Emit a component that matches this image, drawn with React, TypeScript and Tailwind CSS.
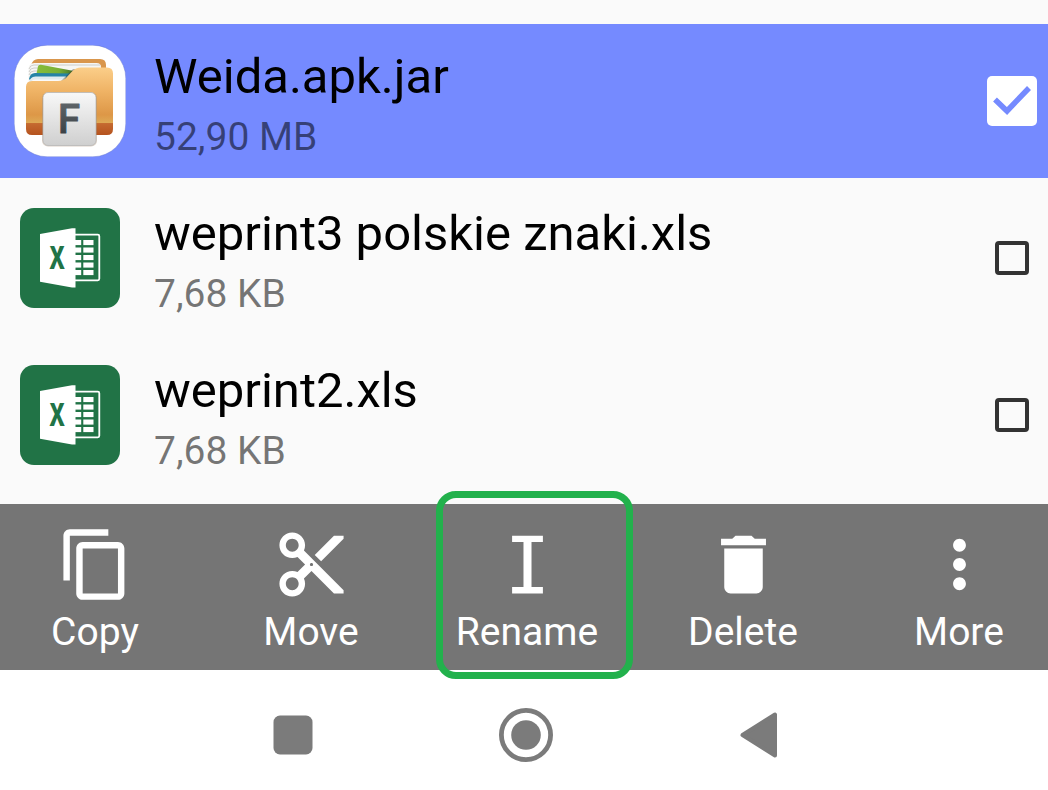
import { useState } from "react";

type FileType = "app" | "xls";

type FileItem = {
  name: string;
  size: string;
  type: FileType;
};

const files: FileItem[] = [
  { name: "Weida.apk.jar", size: "52,90 MB", type: "app" },
  { name: "weprint3 polskie znaki.xls", size: "7,68 KB", type: "xls" },
  { name: "weprint2.xls", size: "7,68 KB", type: "xls" },
];

const actions = [
  {
    label: "Copy",
    path: "M16 1H4c-1.1 0-2 .9-2 2v14h2V3h12V1zm3 4H8c-1.1 0-2 .9-2 2v14c0 1.1.9 2 2 2h11c1.1 0 2-.9 2-2V7c0-1.1-.9-2-2-2zm0 16H8V7h11v14z",
  },
  {
    label: "Move",
    path: "M9.64 7.64c.23-.5.36-1.05.36-1.64 0-2.21-1.79-4-4-4S2 3.79 2 6s1.79 4 4 4c.59 0 1.14-.13 1.64-.36L10 12l-2.36 2.36C7.14 14.13 6.59 14 6 14c-2.21 0-4 1.79-4 4s1.79 4 4 4 4-1.79 4-4c0-.59-.13-1.14-.36-1.64L12 14l7 7h3v-1L9.64 7.64zM6 8c-1.1 0-2-.89-2-2s.9-2 2-2 2 .89 2 2-.9 2-2 2zm0 12c-1.1 0-2-.89-2-2s.9-2 2-2 2 .89 2 2-.9 2-2 2zm6-7.5c-.28 0-.5-.22-.5-.5s.22-.5.5-.5.5.22.5.5-.22.5-.5.5zM19 3l-6 6 2 2 7-7V3z",
  },
  {
    label: "Rename",
    path: "M7.2 3h9.6v2h-3.55v14h3.55v2H7.2v-2h3.55V5H7.2z",
    highlighted: true,
  },
  {
    label: "Delete",
    path: "M6 19c0 1.1.9 2 2 2h8c1.1 0 2-.9 2-2V7H6v12zM19 4h-3.5l-1-1h-5l-1 1H5v2h14V4z",
  },
  {
    label: "More",
    path: "M12 8c1.1 0 2-.9 2-2s-.9-2-2-2-2 .9-2 2 .9 2 2 2zm0 2c-1.1 0-2 .9-2 2s.9 2 2 2 2-.9 2-2-.9-2-2-2zm0 6c-1.1 0-2 .9-2 2s.9 2 2 2 2-.9 2-2-.9-2-2-2z",
  },
];

export default function App() {
  return (
    <div className="flex min-h-screen flex-col overflow-x-clip bg-white font-[Roboto,sans-serif]">
      <FileList />
      <ActionBar />
      <SystemNav />
    </div>
  );
}

const FileList = () => {
  const [selected, setSelected] = useState<string[]>(["Weida.apk.jar"]);
  const toggle = (name: string) =>
    setSelected((state) =>
      state.includes(name) ? state.filter((n) => n !== name) : [...state, name]
    );
  return (
    <ul className="flex flex-col gap-[3px] bg-[#fafafa] pt-6 pb-3">
      {files.map((file) => (
        <FileRow
          key={file.name}
          file={file}
          checked={selected.includes(file.name)}
          onToggle={() => toggle(file.name)}
        />
      ))}
    </ul>
  );
};

type FileRowProps = {
  file: FileItem;
  checked: boolean;
  onToggle: () => void;
};

const FileRow = ({ file, checked, onToggle }: FileRowProps) => {
  return (
    <li className={checked ? "bg-[#758aff]" : ""}>
      <label className="flex items-center gap-7 pr-[11px] pl-[14px]">
        <span className="flex w-28 shrink-0 justify-center">
          {file.type === "app" ? <FolderIcon /> : <ExcelIcon />}
        </span>
        <span className="flex min-w-0 grow flex-col gap-2 pt-6 pb-[18px]">
          <span className="truncate text-[49px] leading-[58px] text-black">
            {file.name}
          </span>
          <span className="text-[39px] leading-[46px] text-black/54">
            {file.size}
          </span>
        </span>
        <span className="relative flex size-[50px] shrink-0 items-center justify-center">
          <input
            type="checkbox"
            checked={checked}
            onChange={onToggle}
            className="size-[34px] appearance-none rounded-[4px] border-4 border-[#333333] checked:size-[50px] checked:rounded-[5px] checked:border-0 checked:bg-white"
          />
          {checked && (
            <svg
              viewBox="0 0 50 50"
              className="pointer-events-none absolute inset-0"
              fill="none"
              stroke="#758aff"
              strokeWidth="5.5"
            >
              <path d="M8 23.5l12 11.5L42 12" />
            </svg>
          )}
        </span>
      </label>
    </li>
  );
};

const ActionBar = () => {
  return (
    <div className="-mr-[19px] -ml-[13px] grid grid-cols-5 bg-[#757575] text-white">
      {actions.map((action) => (
        <button
          key={action.label}
          type="button"
          className="relative flex flex-col items-center gap-[6px] pt-[22px] pb-[15px]"
        >
          <svg viewBox="0 0 24 24" className="size-[77px]" fill="currentColor">
            <path d={action.path} />
          </svg>
          <span className="text-[39px] leading-[46px]">{action.label}</span>
          {action.highlighted && (
            <span className="absolute -top-[13px] right-[2px] -bottom-[9px] left-[17px] rounded-[20px] border-7 border-[#22b14c]" />
          )}
        </button>
      ))}
    </div>
  );
};

const SystemNav = () => {
  const button = "flex w-[233px] items-center justify-center";
  return (
    <nav className="flex justify-center pt-[38px] pb-7 pl-1 text-[#7b7b7b]">
      <button type="button" aria-label="Recents" className={button}>
        <svg viewBox="0 0 54 54" className="size-[54px]" fill="currentColor">
          <rect x="7.5" y="7.5" width="39" height="39" rx="6.5" />
        </svg>
      </button>
      <button type="button" aria-label="Home" className={button}>
        <svg viewBox="0 0 54 54" className="size-[54px]" fill="currentColor">
          <circle cx="27" cy="27" r="24.6" fill="none" stroke="currentColor" strokeWidth="4.8" />
          <circle cx="27" cy="27" r="14.8" />
        </svg>
      </button>
      <button type="button" aria-label="Back" className={button}>
        <svg viewBox="0 0 54 54" className="size-[54px]" fill="currentColor">
          <path
            d="M10.5 27L43 6.5v41z"
            stroke="currentColor"
            strokeWidth="4"
            strokeLinejoin="round"
          />
        </svg>
      </button>
    </nav>
  );
};

const ExcelIcon = () => {
  return (
    <svg viewBox="0 0 100 100" className="size-[100px]">
      <rect width="100" height="100" rx="14" fill="#217346" />
      <rect x="50" y="26.7" width="29.3" height="45.6" rx="1.5" fill="none" stroke="#fff" strokeWidth="1.8" />
      <g fill="#fff">
        {[32, 39.5, 47, 54.5, 62].map((y) => (
          <g key={y}>
            <rect x="54" y={y} width="7.2" height="5.1" />
            <rect x="63.3" y={y} width="10.2" height="5.1" />
          </g>
        ))}
        <path d="M20 26l32-5.7h3.5v59.2H52L20 73.8z" />
      </g>
      <text
        x="37"
        y="61"
        textAnchor="middle"
        fontSize="32"
        fontWeight="700"
        fontFamily="'Liberation Sans Narrow', 'Open Sans Condensed', Roboto, sans-serif"
        fill="#217346"
      >
        X
      </text>
    </svg>
  );
};

const FolderIcon = () => {
  return (
    <svg viewBox="0 0 112 112" className="size-28">
      <defs>
        <linearGradient id="front" x1="0" y1="0" x2="0" y2="1">
          <stop offset="0" stopColor="#fbce89" />
          <stop offset=".35" stopColor="#efb365" />
          <stop offset=".7" stopColor="#dd9747" />
          <stop offset=".82" stopColor="#deaa55" />
          <stop offset=".83" stopColor="#c56a30" />
          <stop offset="1" stopColor="#b5531f" />
        </linearGradient>
        <linearGradient id="tile" x1="0" y1="0" x2="0" y2="1">
          <stop offset="0" stopColor="#f8f8f8" />
          <stop offset="1" stopColor="#cfcfcf" />
        </linearGradient>
        <linearGradient id="leaf" x1="0" y1="0" x2="1" y2="0">
          <stop offset="0" stopColor="#86bd3a" />
          <stop offset=".6" stopColor="#78b035" />
          <stop offset="1" stopColor="#3f6f2c" />
        </linearGradient>
        <linearGradient id="letter" x1="0" y1="0" x2="0" y2="1">
          <stop offset="0" stopColor="#666c70" />
          <stop offset="1" stopColor="#30363b" />
        </linearGradient>
      </defs>
      <rect x=".2" y=".2" width="111.6" height="111.6" rx="33" fill="#fff" stroke="#5b6cc8" strokeWidth=".4" />
      {/* back of the folder and the papers in it */}
      <path d="M17 20q2-6 7-6h62q6 0 6 6v12H17z" fill="#d9964c" />
      <path d="M14.5 24q0-6 6-6h62q4.500 0 4.500 4v16H14.500z" fill="#f6f6f4" />
      <path
        d="M15 24q1-4 5-4h66M15 27q1-4 5-4h4M15 30q1-4 5-4h3"
        fill="none"
        stroke="#c4c4c0"
        strokeWidth=".8"
      />
      <path d="M22.500 28.500L24 21.500q.5-2 3-1.700L60 26l-7 6z" fill="url(#leaf)" />
      <path d="M15 34q1-6 6-6l36 .5-6 6H15z" fill="#2583a6" />
      <path d="M15.500 38q0-6.500 6-6.500h31l-5 7H15.500z" fill="#dfebf0" />
      <path d="M16 40q0-5.500 6-5.500h28l-4 5H16z" fill="#fafafa" />
      <path d="M46 37l13-13 6 0-13 13z" fill="#3a3320" opacity=".35" />
      <path
        d="M12 42q0-6 6-6h26q5 0 8-3l6-6.500q4-4 9-4h26q6 0 6 6v55.500q0 6-6 6H18q-6 0-6-6z"
        fill="url(#front)"
      />
      <rect x="28" y="47.5" width="55" height="54" rx="6" fill="#7b4a20" opacity=".25" />
      <rect x="29" y="47.5" width="53" height="53" rx="5" fill="url(#tile)" stroke="#b9b9b9" strokeWidth=".8" />
      <text
        x="55"
        y="88"
        textAnchor="middle"
        fontSize="40"
        fontWeight="500"
        fontFamily="Roboto, sans-serif"
        fill="url(#letter)"
        stroke="url(#letter)"
        strokeWidth="1"
        strokeLinejoin="round"
      >
        F
      </text>
    </svg>
  );
};
